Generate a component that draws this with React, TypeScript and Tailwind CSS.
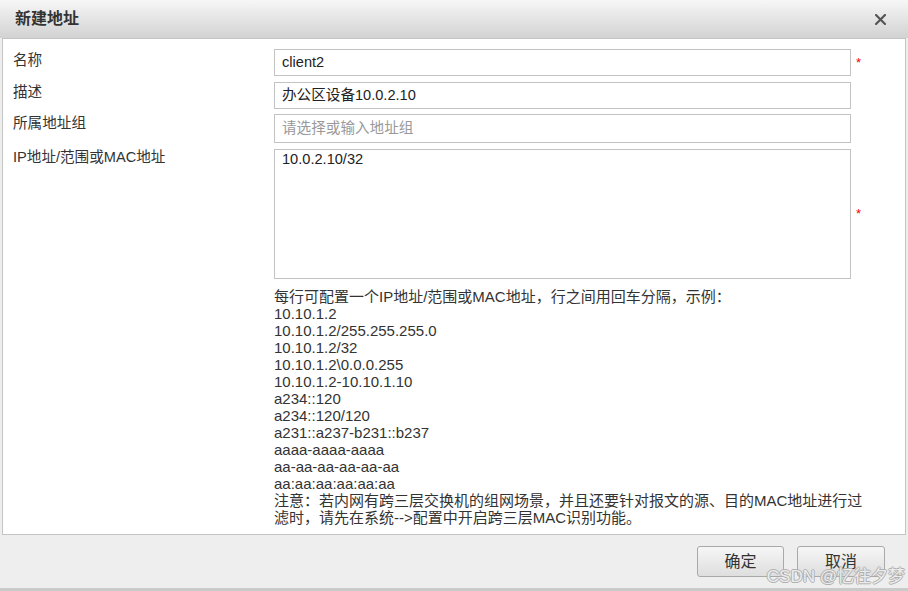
import React from "react";

const helpLines = [
  "每行可配置一个IP地址/范围或MAC地址，行之间用回车分隔，示例：",
  "10.10.1.2",
  "10.10.1.2/255.255.255.0",
  "10.10.1.2/32",
  "10.10.1.2\\0.0.0.255",
  "10.10.1.2-10.10.1.10",
  "a234::120",
  "a234::120/120",
  "a231::a237-b231::b237",
  "aaaa-aaaa-aaaa",
  "aa-aa-aa-aa-aa-aa",
  "aa:aa:aa:aa:aa:aa",
  "注意：若内网有跨三层交换机的组网场景，并且还要针对报文的源、目的MAC地址进行过",
  "滤时，请先在系统-->配置中开启跨三层MAC识别功能。",
];

export default function App() {
  return (
    <div className="w-[908px] h-[591px] bg-[#eeeeee] flex flex-col font-['Liberation_Sans','Noto_Sans_CJK_SC',sans-serif] text-[#333333] overflow-hidden">
      {/* header */}
      <div className="h-[38px] shrink-0 bg-gradient-to-b from-[#f7f7f7] to-[#d2d2d2] flex items-center justify-between pl-[15px] pr-[22px]">
        <span className="text-[16px] font-bold text-[#333333] leading-none">新建地址</span>
        <svg width="11" height="11" viewBox="0 0 11 11" className="mt-[1px]">
          <path d="M1 1 L10 10 M10 1 L1 10" stroke="#555555" strokeWidth="2.2" strokeLinecap="square" />
        </svg>
      </div>
      {/* body */}
      <div className="h-[497px] shrink-0 mx-[2px] border border-[#c4c4c4] bg-white pl-[10px] pt-[10px]">
        <div className="flex flex-col text-[14.6px]">
          <div className="flex items-start">
            <div className="w-[261px] leading-[20px] pt-[1px]">名称</div>
            <div className="w-[577px] h-[27px] border border-[#c3c3c3] flex items-center pl-[7px] text-[#222222]">client2</div>
            <div className="h-[27px] flex items-center pl-[5px] text-[#ff0000] text-[13px]">*</div>
          </div>
          <div className="flex items-start mt-[6px]">
            <div className="w-[261px] leading-[20px]">描述</div>
            <div className="w-[577px] h-[27px] border border-[#c3c3c3] flex items-center pl-[7px] text-[#222222]">办公区设备10.0.2.10</div>
          </div>
          <div className="flex items-start mt-[5px]">
            <div className="w-[261px] leading-[20px] -mt-[1px]">所属地址组</div>
            <div className="w-[577px] h-[29px] border border-[#c3c3c3] flex items-center pl-[7px] text-[#999999]">请选择或输入地址组</div>
          </div>
          <div className="flex items-start mt-[6px]">
            <div className="w-[261px] leading-[20px] -mt-[2px]">IP地址/范围或MAC地址</div>
            <div className="w-[577px] h-[130px] border border-[#c3c3c3] pl-[7px] pt-[1px] leading-[17px] text-[#222222]">10.0.2.10/32</div>
            <div className="h-[130px] flex items-center pl-[5px] text-[#ff0000] text-[13px]">*</div>
          </div>
          <div className="flex mt-[9px]">
            <div className="w-[261px]" />
            <div className="flex flex-col leading-[17px] text-[15px] text-[#333333] whitespace-nowrap">
              {helpLines.map((l, i) => (
                <div key={i}>{l}</div>
              ))}
            </div>
          </div>
        </div>
      </div>
      {/* footer */}
      <div className="h-[53px] shrink-0 flex items-center justify-end pr-[23px] gap-[13px] relative">
        <button className="w-[87px] h-[31px] border border-[#a9a9a9] rounded-[3px] bg-gradient-to-b from-[#f6f6f6] to-[#dedede] text-[16px] text-[#333333]">确定</button>
        <button className="w-[88px] h-[31px] border border-[#a9a9a9] rounded-[3px] bg-gradient-to-b from-[#f6f6f6] to-[#dedede] text-[16px] text-[#333333]">取消</button>
        <div className="absolute right-[3px] bottom-[3px] text-[17px] text-[#ececec] [text-shadow:1px_0_0_#b0b0b0,-1px_0_0_#b0b0b0,0_1px_0_#b0b0b0,0_-1px_0_#b0b0b0] leading-none">CSDN @忆往夕梦</div>
      </div>
      <div className="flex-1 bg-[#cacaca]" />
    </div>
  );
}
